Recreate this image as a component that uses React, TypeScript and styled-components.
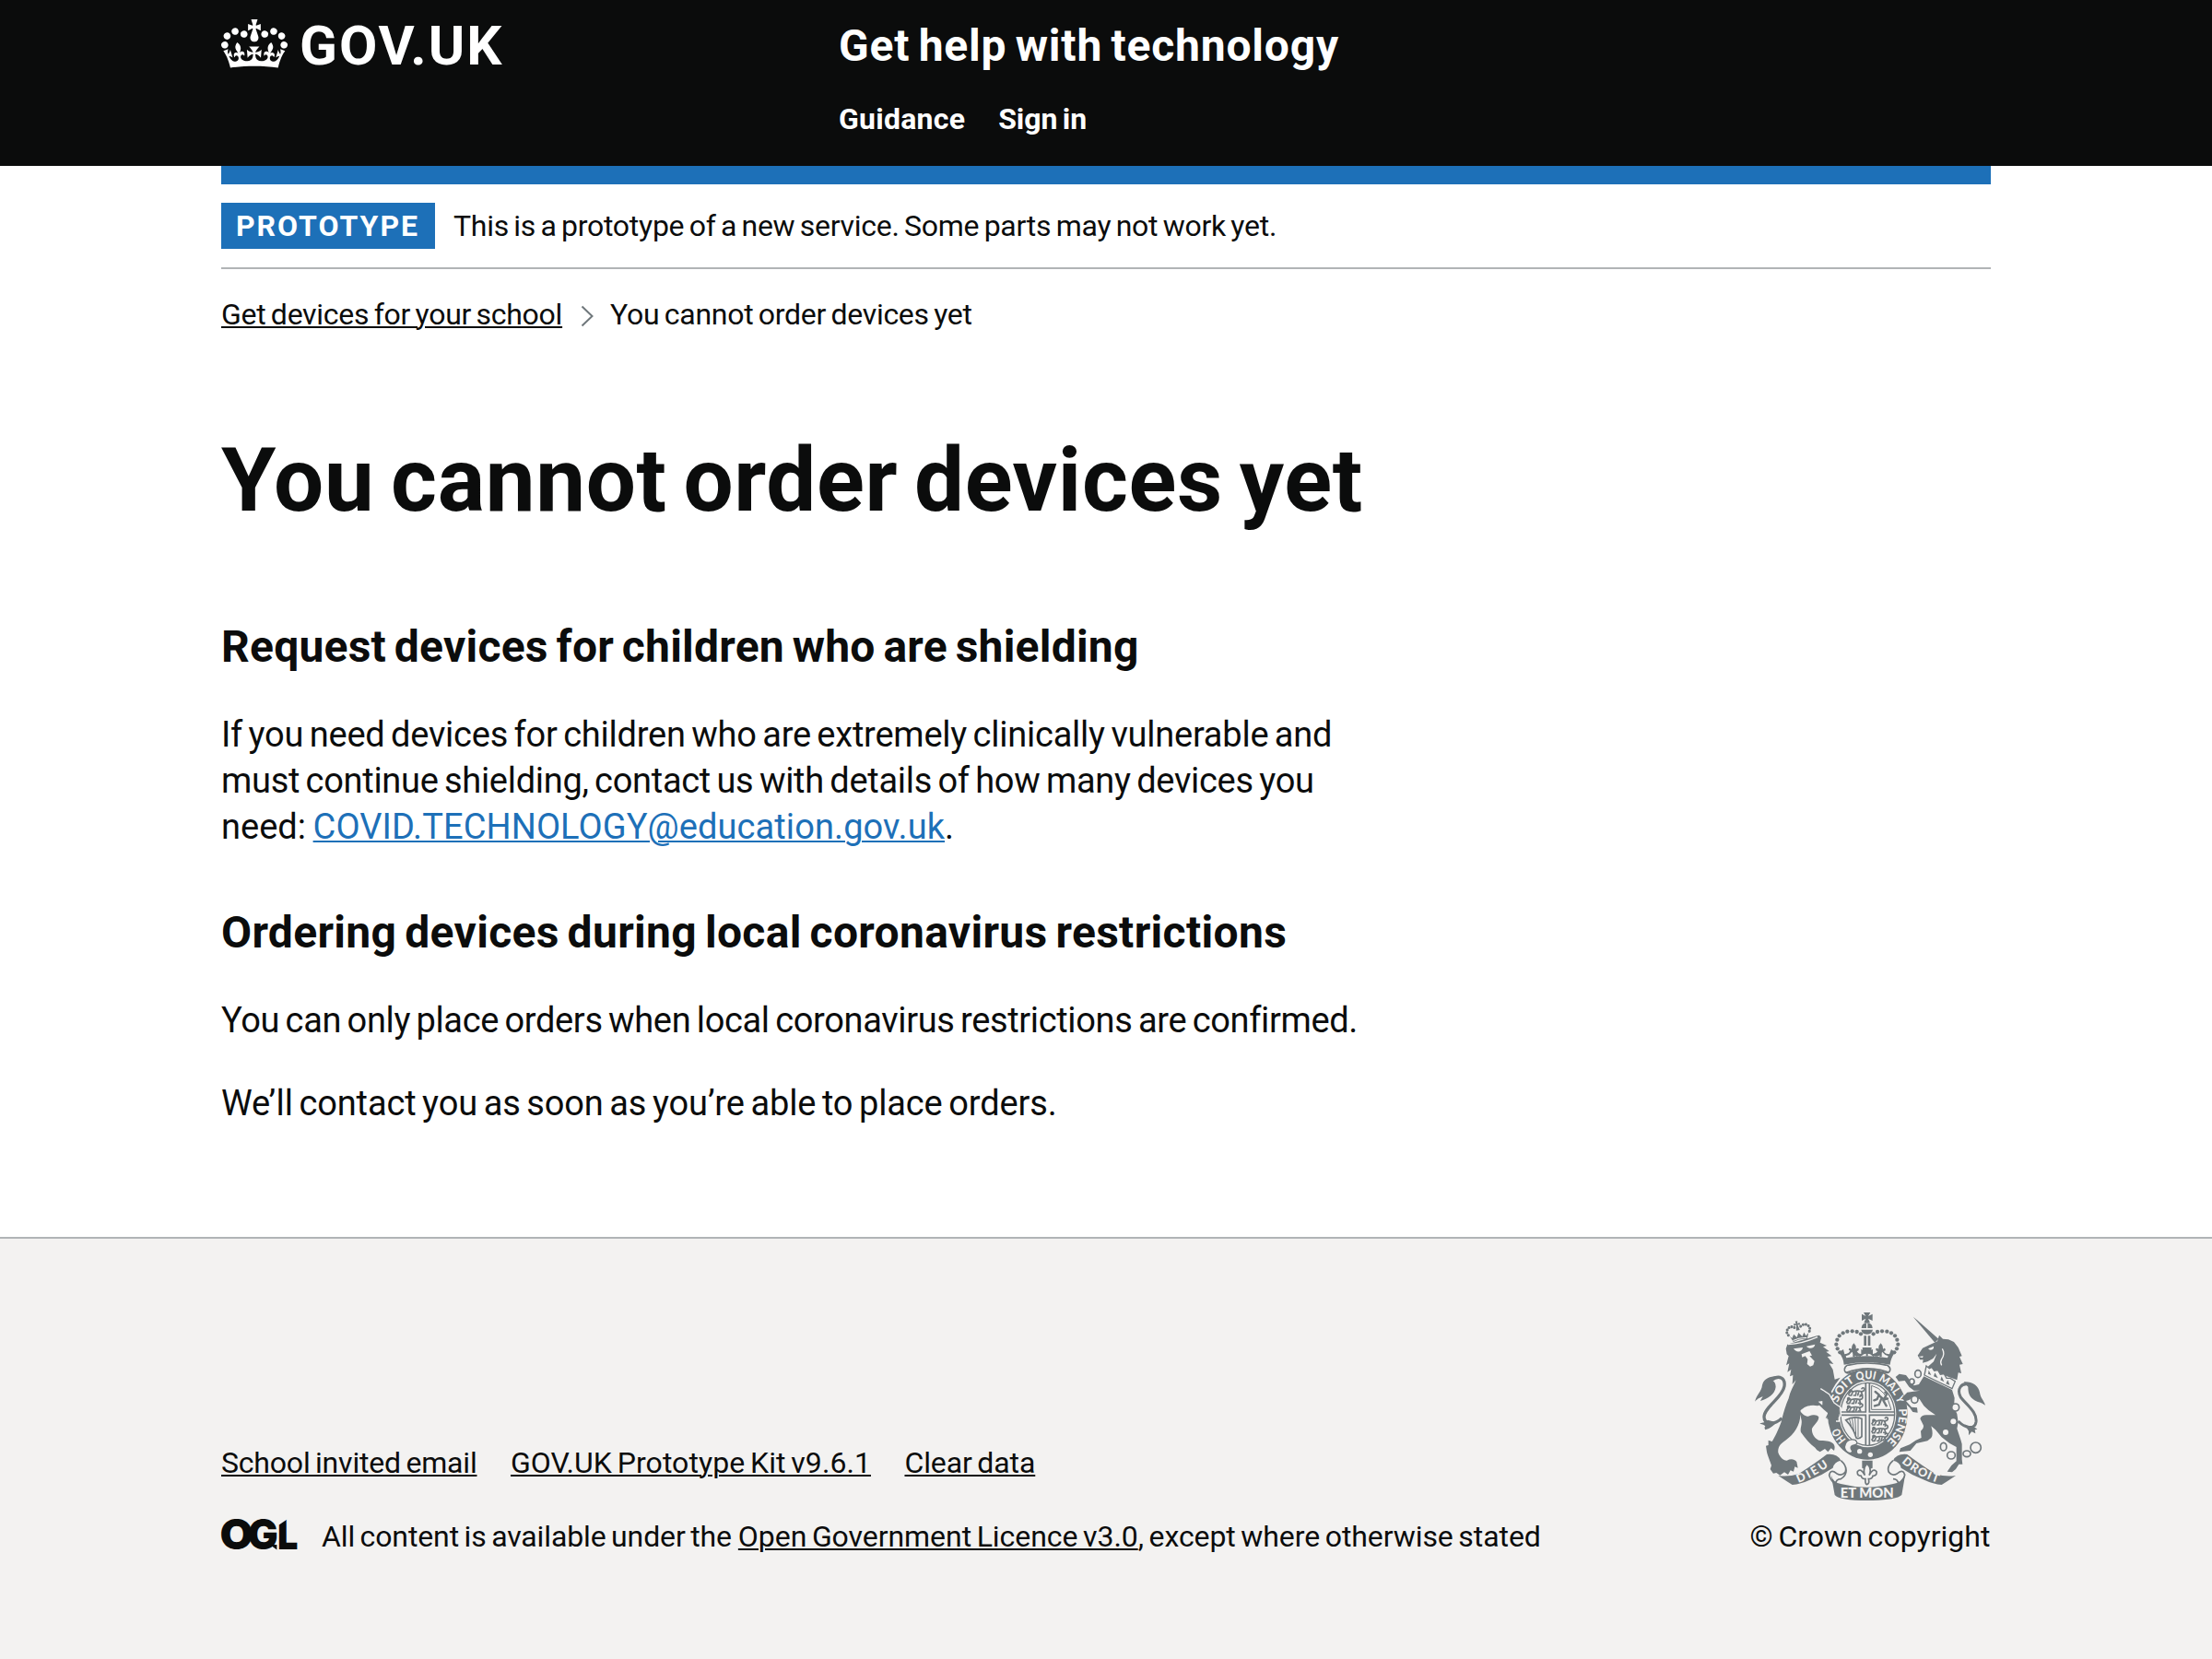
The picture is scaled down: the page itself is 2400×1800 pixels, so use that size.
import React from 'react';
import styled, { createGlobalStyle } from 'styled-components';

const ink = '#0b0c0c';
const blue = '#1d70b8';
const rule = '#b1b4b6';
const panel = '#f3f2f1';
const crest = '#6f777b';

const GlobalStyle = createGlobalStyle`
  html, body { margin: 0; padding: 0; background: ${panel}; }
  body { font-family: Roboto, "Liberation Sans", sans-serif; color: ${ink}; font-kerning: normal; }
  body * { word-spacing: -0.07em; }
  body svg * { word-spacing: 0; }
`;

const Page = styled.div`
  display: flex;
  flex-direction: column;
  min-height: 1800px;
  background: #fff;
`;

const Container = styled.div`
  width: 1920px;
  margin: 0 auto;
`;

const Header = styled.header`
  height: 180px;
  background: ${ink};
  color: #fff;
`;

const HeaderGrid = styled(Container)`
  display: grid;
  grid-template-columns: 670px 1fr;
  padding-top: 20px;
`;

const Logo = styled.a`
  display: flex;
  align-items: flex-start;
  gap: 13px;
  color: #fff;
  svg { display: block; margin-top: 1px; }
`;

const LogoText = styled.span`
  font-size: 60px;
  line-height: 60px;
  font-weight: 700;
  letter-spacing: 1.98px;
`;

const ServiceName = styled.div`
  font-size: 48px;
  line-height: 60px;
  font-weight: 700;
  letter-spacing: 0.806px;
  white-space: nowrap;
`;

const Nav = styled.nav`
  display: flex;
  gap: 36px;
  margin-top: 24px;
  font-size: 32px;
  line-height: 50px;
  font-weight: 700;
`;

const Run = styled.span<{ $ls?: number }>`
  letter-spacing: ${p => p.$ls ?? 0}px;
  white-space: nowrap;
`;

const BlueBar = styled.div`
  height: 20px;
  background: ${blue};
`;

const PhaseBanner = styled.div`
  display: flex;
  align-items: center;
  gap: 20px;
  padding: 20px 0;
  border-bottom: 2px solid ${rule};
  font-size: 32px;
  line-height: 50px;
`;

const Tag = styled.strong`
  box-sizing: border-box;
  width: 232px;
  padding-left: 16px;
  background: ${blue};
  color: #fff;
  font-weight: 700;
  letter-spacing: 1.99px;
`;

const Breadcrumbs = styled.div`
  display: flex;
  align-items: center;
  margin-top: 29px;
  font-size: 32px;
  line-height: 40px;
  svg { margin: 3px 18px 0 20px; }
`;

const Link = styled.a<{ $ls?: number; $color?: string }>`
  color: ${p => p.$color ?? ink};
  letter-spacing: ${p => p.$ls ?? 0}px;
  text-decoration: underline;
  text-decoration-thickness: 2px;
  text-underline-offset: 2px;
  white-space: nowrap;
`;

const Main = styled.main`
  padding: 110px 0 120px;
`;

const Title = styled.h1`
  margin: 0 0 101px;
  font-size: 96px;
  line-height: 100px;
  font-weight: 700;
  letter-spacing: 0.65px;
`;

const Heading = styled.h2<{ $ls: number }>`
  margin: 0 0 40px;
  font-size: 48px;
  line-height: 60px;
  font-weight: 700;
  letter-spacing: ${p => p.$ls}px;
`;

const Paragraph = styled.p<{ $gap: number }>`
  display: flex;
  flex-direction: column;
  margin: 0 0 ${p => p.$gap}px;
  font-size: 38px;
  line-height: 50px;
`;

const Line = styled.span`
  display: flex;
`;

const Footer = styled.footer`
  flex: 1;
  border-top: 2px solid ${rule};
  background: ${panel};
  font-size: 32px;
  line-height: 40px;
`;

const FooterGrid = styled(Container)`
  display: flex;
  align-items: flex-end;
  justify-content: space-between;
  height: 343px;
`;

const FooterLinks = styled.div`
  display: flex;
  gap: 36.5px;
  margin-bottom: 40px;
`;

const Licence = styled.div`
  display: flex;
  align-items: flex-start;
  svg { display: block; margin: 1px 26px 0 0; overflow: visible; }
`;

const Copyright = styled.div`
  display: flex;
  flex-direction: column;
  align-items: center;
  width: 262px;
  svg { display: block; margin: 0 0 19px -1px; }
`;

const Space = styled.span<{ $w: number }>`
  flex: none;
  width: ${p => p.$w}px;
`;

const CrownIcon = () => (
  <svg width="72" height="53" viewBox="0 0 132 97" fill="currentColor" fillRule="evenodd">
    <path d="M25 30.2c3.5 1.5 7.7-.2 9.1-3.7 1.5-3.6-.2-7.8-3.9-9.2-3.6-1.4-7.6.3-9.1 3.9-1.4 3.5.3 7.5 3.9 9zM9 39.5c3.6 1.5 7.8-.2 9.2-3.7 1.5-3.6-.2-7.8-3.9-9.1-3.6-1.5-7.6.2-9.1 3.8-1.4 3.5.3 7.5 3.8 9zM4.4 57.2c3.5 1.5 7.7-.2 9.1-3.8 1.5-3.6-.2-7.7-3.9-9.1-3.5-1.5-7.6.3-9.1 3.8-1.4 3.5.3 7.6 3.9 9.1zm38.3-21.4c3.5 1.5 7.7-.2 9.1-3.8 1.5-3.6-.2-7.7-3.9-9.1-3.6-1.5-7.6.3-9.1 3.8-1.3 3.6.4 7.7 3.9 9.1zm64.4-5.6c-3.6 1.5-7.8-.2-9.1-3.7-1.5-3.6.2-7.8 3.8-9.2 3.6-1.4 7.7.3 9.2 3.9 1.3 3.5-.4 7.5-3.9 9zm15.9 9.3c-3.6 1.5-7.7-.2-9.1-3.7-1.5-3.6.2-7.8 3.7-9.1 3.6-1.5 7.7.2 9.2 3.8 1.5 3.5-.3 7.5-3.8 9zm4.7 17.7c-3.6 1.5-7.8-.2-9.2-3.8-1.5-3.6.2-7.7 3.9-9.1 3.6-1.5 7.7.3 9.2 3.8 1.3 3.5-.4 7.6-3.9 9.1zM89.3 35.8c-3.6 1.5-7.8-.2-9.2-3.8-1.4-3.6.2-7.7 3.9-9.1 3.6-1.5 7.7.3 9.2 3.8 1.4 3.6-.3 7.7-3.9 9.1zM69.7 17.7l8.9 4.7V9.3l-8.9 2.8c-.2-.3-.5-.6-.9-.9L72.4 0H59.6l3.5 11.2c-.3.3-.6.5-.9.9l-8.8-2.8v13.1l8.8-4.7c.3.3.6.7.9.9l-5 15.4v.1c-.2.8-.4 1.6-.4 2.4 0 4.1 3.1 7.5 7 8.1h.2c.3 0 .7.1 1 .1.4 0 .7 0 1-.1h.2c4-.6 7.1-4.1 7.1-8.1 0-.8-.1-1.7-.4-2.4V34l-5.1-15.4c.4-.2.7-.6 1-.9zM66 92.8c16.9 0 32.8 1.1 47.1 3.2 4-16.9 8.9-26.7 14-33.5l-9.6-3.4c1 4.9 1.1 7.2 0 10.2-1.5-1.4-3-4.3-4.2-8.7L108.6 76c2.8-2 5-3.2 7.5-3.3-4.4 9.4-10 11.9-13.6 11.2-4.3-.8-6.3-4.6-5.6-7.9 1-4.7 5.7-5.9 8-.5 4.3-8.7-3-11.4-7.6-8.8 7.1-7.2 7.9-13.5 2.1-21.1-8 6.1-8.1 12.3-4.5 20.8-4.7-5.4-12.1-2.5-9.5 6.2 3.4-5.2 7.9-2 7.2 3.1-.6 4.3-6.4 7.8-13.5 7.2-10.3-.9-10.9-8-11.2-13.8 2.5-.5 7.1 1.8 11 7.3L80.2 60c-4.1 4.4-8 5.3-12.3 5.4 1.4-4.4 8-11.6 8-11.6H55.5s6.4 7.2 7.9 11.6c-4.2-.1-8-1-12.3-5.4l1.4 16.4c3.9-5.5 8.5-7.7 10.9-7.3-.3 5.8-.9 12.8-11.1 13.8-7.2.6-12.9-2.9-13.5-7.2-.7-5 3.8-8.3 7.1-3.1 2.7-8.7-4.6-11.6-9.4-6.2 3.7-8.5 3.6-14.7-4.6-20.8-5.8 7.6-5 13.9 2.2 21.1-4.7-2.6-11.9.1-7.7 8.8 2.3-5.5 7.1-4.2 8.1.5.7 3.3-1.3 7.1-5.7 7.9-3.5.7-9-1.8-13.5-11.2 2.5.1 4.7 1.3 7.5 3.3l-4.7-15.4c-1.2 4.4-2.7 7.2-4.3 8.7-1.1-3-.9-5.3 0-10.2l-9.5 3.4c5 6.9 9.9 16.7 14 33.5 14.8-2.1 30.8-3.2 47.7-3.2z" />
  </svg>
);

const OglLogo = () => (
  <svg width="83" height="34" viewBox="0 0 83 34" fill={ink}>
    <g fontFamily="Inter, sans-serif" fontWeight="900" fontSize="45">
      <text x="-1.4" y="33" textLength="36.4" lengthAdjust="spacingAndGlyphs">O</text>
      <text x="28.8" y="33" textLength="33" lengthAdjust="spacingAndGlyphs">G</text>
      <text x="61" y="33" textLength="22.4" lengthAdjust="spacingAndGlyphs">L</text>
    </g>
    <path d="M53 28h7.4v5.6z" />
    <path fill={panel} d="M61.4-1h11.6v.6L63 6.2h-1.6z" />
  </svg>
);

const pearls: [number, number][] = [
  [387, 112], [374, 105], [359, 103], [343, 104], [329, 109], [317, 118], [310, 131], [307, 146], [311, 160], [319, 172],
];

/* Offsets along the garter of each word of its motto, with the length it fills. */
const motto: [string, number, number][] = [
  ['HO', 78, 46], ['SOIT', 206, 90], ['QUI', 304, 60], ['MAL', 374, 74], ['Y', 454, 22], ['PENSE', 492, 118],
];

/* One passant lion, stacked three times in the English quarters of the shield. */
const Passant = ({ x, y }: { x: number; y: number }) => (
  <g transform={`translate(${x} ${y})`} fill="none" stroke={crest} strokeWidth="5" strokeLinecap="round">
    <path d="M6 8q6-7 11 0q14-5 30 0M8 9l-5 7M16 10l-4 10h-7M28 9l-2 11h-6M44 8l4 11h-7M36 9l-3 10M47 7q10-2 7-10q-4-4-8 1" />
    <circle cx="9" cy="5" r="3" />
  </g>
);

const RoyalArms = () => (
  <svg width="250" height="204" viewBox="42 42 750 612" fill={crest}>
    {/* lion */}
    <path fill="none" stroke={crest} strokeWidth="10" d="M96 262C120 244 142 254 138 282C132 320 72 350 72 382C72 408 106 410 130 386" />
    <path d="M112 250C92 250 72 256 66 278C64 300 50 304 42 332C54 320 62 318 68 316C64 322 62 326 60 330C84 322 108 308 110 284C110 272 104 266 100 264ZM84 392C72 402 64 400 58 404C68 406 72 408 76 412C72 418 74 420 76 424C92 420 104 410 112 400Z" />
    <path d="M143 160L148 146L162 142L244 118L252 116L258 124L254 140L276 150L264 154L284 168L274 170L292 184L278 186L298 210L284 208L296 228L302 260L320 254L304 276L290 300L304 318L316 346L320 372L312 378L316 396L304 388L298 402L292 390L284 396L280 384L272 386L280 370L266 358L252 344L246 346L232 344C216 344 200 350 190 362C194 372 206 380 216 380C232 374 244 374 250 382C250 398 234 408 228 420C226 436 236 452 250 458C270 460 284 458 296 468C304 476 302 484 300 492L290 484L280 496L270 486L254 496L244 490L238 482C220 470 206 452 192 432C188 420 196 408 194 394L190 374C190 408 170 438 142 458C126 468 116 480 118 498C124 514 134 524 146 524C158 518 170 518 178 528L182 548L172 544L168 560L158 556L150 570L138 562L124 572L112 564L102 566L92 552L96 540C88 516 82 506 80 490L78 476L86 474L86 458L98 462C108 446 120 420 128 398C134 370 144 340 152 322C156 300 168 282 176 262L164 276L166 246L156 250L160 228L148 236L154 208L144 214L152 184L146 178Z" />
    <g fill={panel}>
      <path d="M168 160L198 156C196 172 176 174 168 160ZM210 152L238 146C236 160 218 162 210 152Z" />
      <path d="M194 178L204 174L220 168L228 182L220 184L236 200L232 214L222 218L212 210L214 194L206 184L196 188Z" />
      <path d="M248 332L262 344L266 336L272 352L282 350L280 366L290 364L280 344L262 330Z" />
    </g>
    <path fill="none" stroke={panel} strokeWidth="4" d="M150 146Q196 144 246 122" />
    {/* lion's crown */}
    <g transform="translate(184 108) rotate(-11)">
      <path d="M-30 6L-22 26Q0 19 24 26L32 6L22 14L18 2L10 14L0 0L-8 14L-16 2L-24 14Z" />
      <path fill={panel} d="M-22 20Q0 14 23 20v3Q0 17-22 23Z" />
      {[[-34, 2], [-37, -7], [-34, -16], [-27, -22], [-18, -23], [-10, -19], [36, 2], [39, -7], [36, -16], [29, -22], [20, -23], [11, -19]].map(([x, y], i) => <circle key={i} cx={x} cy={y} r="4.6" />)}
      <path d="M-4-38h8l-2 8 8-2v8l-8-2 4 18h-12l4-18-8 2v-8l8 2Z" />
    </g>
    {/* central crown */}
    <path d="M396 42h22l-7 12 14-7v22l-14-7 6 14h-20l6-14-13 7V47l13 7Z" />
    <path d="M389 93A18 18 0 0 1 404 76h6A18 18 0 0 1 425 93ZM388 98h38q-3 15-19 15t-19-15Z" />
    <path fill={panel} d="M405 77h4v16h-4Z" />
    <path d="M397 118h8v32h-8ZM410 118h8v32h-8Z" />
    {pearls.map(([x, y], i) => <React.Fragment key={i}><circle cx={x} cy={y} r="6.4" /><circle cx={815 - x} cy={y} r="6.4" /></React.Fragment>)}
    <path d="M316 172L330 162L334 178Q350 176 352 166Q344 164 350 158Q354 158 357 162Q356 150 364 142Q373 150 371 162Q376 156 380 160Q382 168 374 168Q380 180 394 176L392 156H422L420 176Q434 180 442 168Q434 168 436 160Q440 156 445 162Q443 150 452 142Q460 150 459 162Q464 156 466 160Q470 166 462 168Q466 178 480 178L486 162L498 172Q484 192 482 212Q407 196 332 212Q330 190 316 172Z" />
    <path fill={panel} d="M338 184Q352 180 358 170Q366 184 376 186Q390 188 398 174L407 168L416 174Q424 188 438 186Q450 184 456 170Q464 180 476 184L474 190Q407 178 340 190Z" />
    <path d="M402 156h10l-2 12 16-6v18l-16-4v8h-6v-8l-16 4v-18l16 6ZM361 150h7v36h-7ZM448 150h7v36h-7Z" />
    <path fill={panel} stroke={crest} strokeWidth="5" d="M344 214Q407 200 472 214Q484 220 482 230Q480 240 470 238Q407 224 346 240Q334 238 334 228Q334 218 344 214Z" />
    {/* garter */}
    <ellipse cx="409" cy="373" rx="130" ry="148" />
    <path fill={panel} d="M346 238Q407 216 470 236L476 230L472 216L344 216L336 230Z" />
    <path fill="none" stroke={crest} strokeWidth="5" d="M340 238Q407 212 476 236" />
    <ellipse cx="409" cy="373" rx="93" ry="108" fill={panel} />
    <ellipse cx="409" cy="373" rx="88" ry="102" fill="none" stroke={crest} strokeWidth="4" />
    {/* shield quarters */}
    <path fill="none" stroke={crest} strokeWidth="5" d="M403 272V366H320M415 272V366H497M403 474V376H320M415 474V376H497" />
    <Passant x={344} y={292} /><Passant x={338} y={318} /><Passant x={338} y={344} />
    <Passant x={420} y={388} /><Passant x={420} y={414} /><Passant x={420} y={440} />
    <path fill="none" stroke={crest} strokeWidth="3" d="M422 280Q470 292 486 358H422Z" />
    <path fill="none" stroke={crest} strokeWidth="7" strokeLinecap="round" d="M434 300L446 310L440 324L430 328M446 312L462 326L474 322M454 322L446 342L432 346M460 328L470 346M464 320Q476 306 466 302" />
    <path fill="none" stroke={crest} strokeWidth="5" d="M338 392Q364 378 390 388V446Q380 456 372 450Q364 420 338 392Z" />
    <path fill="none" stroke={crest} strokeWidth="3" d="M350 390L356 412M359 387L364 428M368 385L371 440M378 386V448" />
    {/* the lion's forepaw overlaps the garter */}
    <path fill="none" stroke={panel} strokeWidth="4" d="M256 290L284 308L300 336L322 352L322 378L316 384L316 396L306 396" />
    <path d="M262 296L282 312L298 340L316 354L318 372L310 380L312 394L304 390L296 402L290 392L276 388L286 372L262 344Z" />
    <path id="garterPath" fill="none" d="M409 486A102 114 0 0 1 409 258A102 114 0 0 1 409 486" />
    <g fill={panel} fontFamily="Lato, sans-serif" fontWeight="900" fontSize="37">
      {motto.map(([word, at, len]) => (
        <text key={word}><textPath href="#garterPath" startOffset={at} textLength={len} lengthAdjust="spacingAndGlyphs">{word}</textPath></text>
      ))}
    </g>
    {/* buckle */}
    <path fill={panel} stroke={crest} strokeWidth="4" d="M344 460Q358 452 370 458Q382 470 364 474Q350 476 356 488Q364 496 352 500Q336 496 334 480Q336 466 344 460Z" />
    <circle cx="383" cy="494" r="8" fill={panel} /><circle cx="418" cy="505" r="8" fill={panel} />
    {/* unicorn */}
    <path d="M557 56L572 68L640 128L628 140Z" />
    <path d="M572 182L588 158L610 148L636 136L642 116L654 128L672 130L690 138L704 156L716 184L708 186L719 210L708 212L714 240L704 238L700 262L640 240L604 220L624 202L634 176L622 192L604 202L588 206L590 196L580 196Z" />
    <path fill={panel} d="M606 160L624 152Q626 164 612 164ZM574 186L590 184L588 190Z" />
    <path fill="none" stroke={panel} strokeWidth="4" d="M652 160Q662 176 650 194Q644 204 650 214" />
    <path fill={panel} stroke={crest} strokeWidth="4" d="M600 216L610 224L618 220L626 232L638 230L646 244L658 242L666 256L678 256L694 266L684 290L594 246Z" />
    <path d="M608 230l8 16-10-4ZM628 238l10 18-14-6ZM650 250l8 18-12-6ZM670 262l6 16-12-4Z" />
    <path d="M592 250L684 294L692 320L690 350L700 372L704 400L700 420L712 456L716 470V520L718 536L706 536L696 552L684 562L668 560L682 540L698 526V480L676 468L650 448L630 424L616 412Q624 440 616 450L604 460L568 468L548 492L512 496L516 484L546 472L566 458L584 450L582 428Q594 418 590 408L580 388Q584 376 600 376L630 376Q606 362 592 346L578 324L552 318L546 326L534 330L552 350L570 352L572 368L556 366L546 352L530 336L522 318L538 302L580 296L560 296L544 284L530 264L510 266L500 252L512 242L534 246L560 280L576 276Z" />
    <g fill={panel} stroke={crest} strokeWidth="5">
      <ellipse cx="573" cy="242" rx="10" ry="12" /><ellipse cx="553" cy="267" rx="8" ry="9" /><ellipse cx="562" cy="325" rx="11" ry="12" />
      <ellipse cx="695" cy="351" rx="12" ry="12" /><circle cx="688" cy="397" r="9" stroke="none" /><circle cx="663" cy="432" r="9" stroke="none" />
      <ellipse cx="656" cy="479" rx="10" ry="13" /><ellipse cx="681" cy="507" rx="13" ry="12" /><ellipse cx="732" cy="502" rx="12" ry="10" /><circle cx="761" cy="482" r="17" />
    </g>
    <path fill="none" stroke={crest} strokeWidth="9" d="M738 276C714 270 698 292 712 318C732 344 766 366 762 398C758 424 728 420 704 396" />
    <path d="M722 268C748 266 770 280 774 302C776 320 788 328 792 344C778 334 772 334 766 332C744 322 736 310 736 284ZM724 406C740 414 754 412 766 422L758 424L760 436L748 430L738 442L738 428Z" />
    {/* motto scroll */}
    <path d="M118 573Q150 578 184 568Q240 532 276 504Q310 500 322 524Q300 528 296 548Q260 572 224 586Q190 602 164 603Q146 592 118 573Z" />
    <path d="M696 573Q664 578 630 568Q574 532 538 504Q504 500 492 524Q514 528 518 548Q554 572 590 586Q624 602 650 603Q668 592 696 573Z" />
    <path fill={panel} stroke={crest} strokeWidth="5" d="M322 524Q344 544 336 562Q326 576 308 566Q288 550 284 572Q288 588 304 602Q306 584 322 584Q344 570 338 548M492 524Q470 544 478 562Q488 576 506 566Q526 550 530 572Q526 588 510 602Q508 584 492 584" />
    <path d="M290 570Q296 596 322 600Q407 622 492 600Q520 596 532 566L520 636Q500 654 407 654Q318 654 302 636Z" />
    <g fill={panel} fontFamily="Lato, sans-serif" fontWeight="900">
      <path id="dieuPath" fill="none" d="M184 597Q240 576 300 529" />
      <text fontSize="38"><textPath href="#dieuPath" textLength="112">DIEU</textPath></text>
      <path id="droitPath" fill="none" d="M519 530Q570 576 640 597" />
      <text fontSize="38"><textPath href="#droitPath" textLength="136">DROIT</textPath></text>
      <text x="320" y="645" fontSize="44" textLength="174" lengthAdjust="spacingAndGlyphs">ET MON</text>
    </g>
    {/* fleur-de-lis */}
    <path d="M391 524h34v24l-18 8-16-8Z" />
    <path fill={panel} stroke={crest} strokeWidth="5" d="M407 534Q424 550 414 572Q428 546 438 560Q440 574 426 574Q424 584 412 584Q416 600 407 602Q400 600 402 584Q390 584 388 574Q374 574 376 560Q386 546 400 572Q392 550 407 534Z" />
  </svg>
);

export default function App() {
  return (
    <>
      <GlobalStyle />
      <Page>
        <Header>
          <HeaderGrid>
            <Logo>
              <CrownIcon />
              <LogoText>GOV.UK</LogoText>
            </Logo>
            <div>
              <ServiceName>Get help with technology</ServiceName>
              <Nav>
                <Run $ls={0.25}>Guidance</Run>
                <Run $ls={-0.1}>Sign in</Run>
              </Nav>
            </div>
          </HeaderGrid>
        </Header>
        <Container>
          <BlueBar />
          <PhaseBanner>
            <Tag>PROTOTYPE</Tag>
            <Run $ls={-0.275}>This is a prototype of a new service. Some parts may not work yet.</Run>
          </PhaseBanner>
          <Breadcrumbs>
            <Link $ls={-0.27}>Get devices for your school</Link>
            <svg width="14" height="24" viewBox="0 0 14 24" fill="none" stroke="#6f777b" strokeWidth="2">
              <path d="M1.5 1.5L12.5 12L1.5 22.5" />
            </svg>
            <Run $ls={-0.28}>You cannot order devices yet</Run>
          </Breadcrumbs>
          <Main>
            <Title>You cannot order devices yet</Title>
            <Heading $ls={0.229}>Request devices for children who are shielding</Heading>
            <Paragraph $gap={60}>
              <Run $ls={-0.235}>If you need devices for children who are extremely clinically vulnerable and</Run>
              <Run $ls={-0.298}>must continue shielding, contact us with details of how many devices you</Run>
              <Line>
                <Run>need:</Run>
                <Space $w={7.7} />
                <Link $ls={0.09} $color={blue}>COVID.TECHNOLOGY@education.gov.uk</Link>.
              </Line>
            </Paragraph>
            <Heading $ls={0.32}>Ordering devices during local coronavirus restrictions</Heading>
            <Paragraph $gap={40}>
              <Run $ls={-0.345}>You can only place orders when local coronavirus restrictions are confirmed.</Run>
            </Paragraph>
            <Paragraph $gap={0}>
              <Run $ls={-0.135}>We’ll contact you as soon as you’re able to place orders.</Run>
            </Paragraph>
          </Main>
        </Container>
        <Footer>
          <FooterGrid>
            <div>
              <FooterLinks>
                <Link $ls={-0.19}>School invited email</Link>
                <Link $ls={0.064}>GOV.UK Prototype Kit v9.6.1</Link>
                <Link $ls={-0.11}>Clear data</Link>
              </FooterLinks>
              <Licence>
                <OglLogo />
                <Run $ls={-0.129}>All content is available under the</Run>
                <Space $w={7} />
                <Link $ls={-0.06}>Open Government Licence v3.0</Link>
                <Run $ls={-0.08}>, except where otherwise stated</Run>
              </Licence>
            </div>
            <Copyright>
              <RoyalArms />
              <Run $ls={0.03}>© Crown copyright</Run>
            </Copyright>
          </FooterGrid>
        </Footer>
      </Page>
    </>
  );
}
